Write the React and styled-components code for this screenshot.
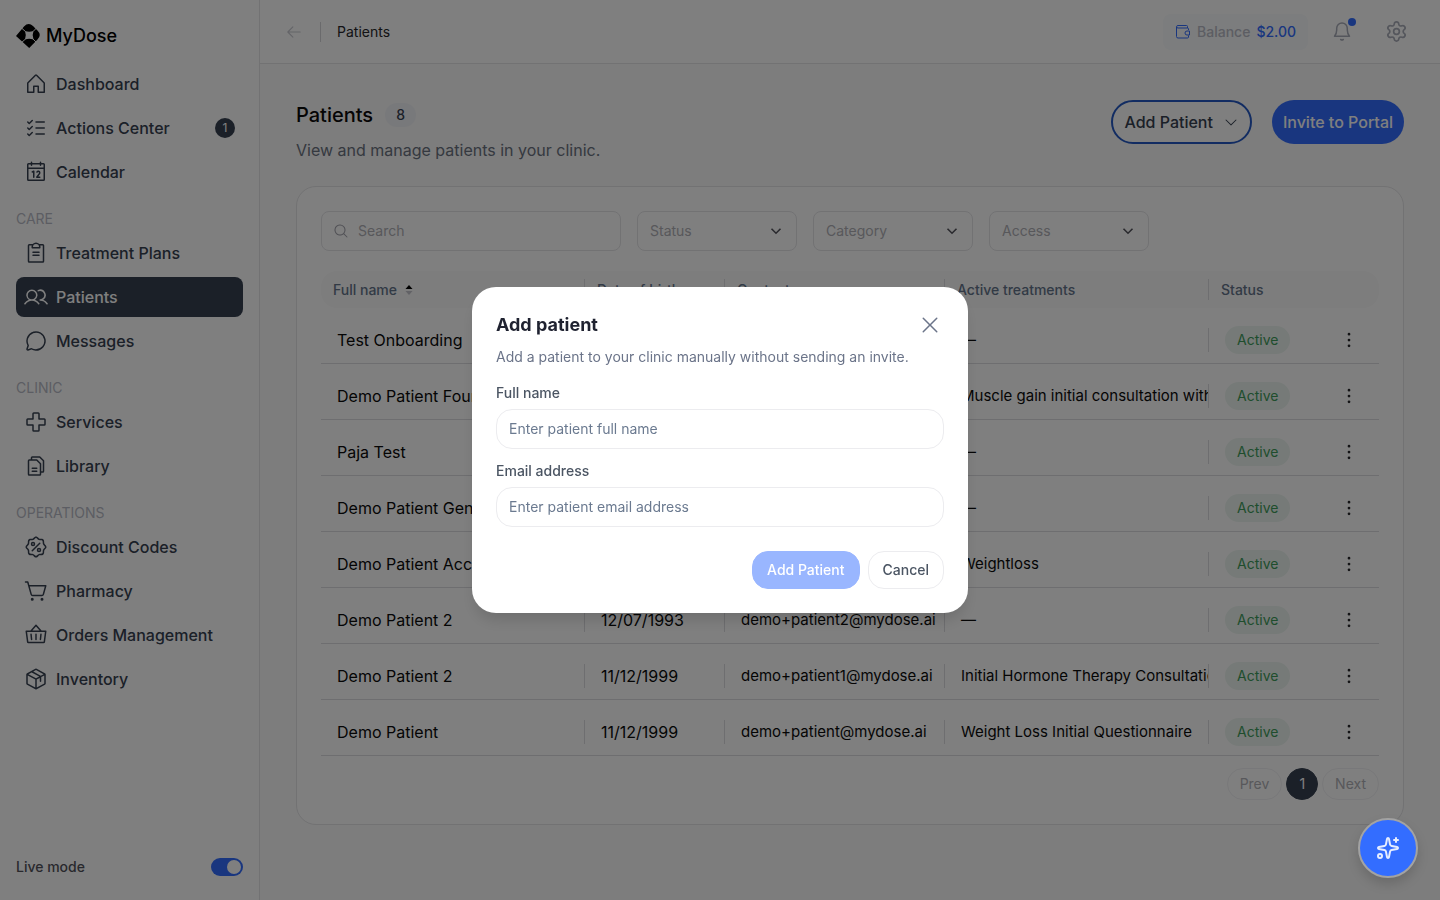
import React from 'react';
import styled, { createGlobalStyle } from 'styled-components';
import {
  PiHouse, PiListChecks, PiCalendar, PiClipboardText, PiUsers, PiChatCircle, PiFirstAid, PiFiles,
  PiSealPercent, PiShoppingCartSimple, PiBasket, PiPackage, PiArrowLeft, PiCaretDown, PiMagnifyingGlass,
  PiX, PiDotsThreeVerticalBold,
} from 'react-icons/pi';
import { Sparkles, Settings } from 'lucide-react';

const GlobalStyle = createGlobalStyle`
  * {
    box-sizing: border-box;
  }
  body {
    margin: 0;
    background: #fafafa;
    color: #0a0a0a;
    font-family: Inter, 'Liberation Sans', sans-serif;
    font-size: 16px;
    line-height: 24px;
  }
  button, input, select {
    font: inherit;
    color: inherit;
    margin: 0;
  }
  h1, h2, p {
    margin: 0;
  }
`

const Page = styled.div`
  display: flex;
  min-height: 100vh;
`

const Sidebar = styled.aside`
  display: flex;
  flex-direction: column;
  flex: none;
  width: 260px;
  padding: 20px 16px;
  background: #fff;
  border-right: 1px solid #e4e4e7;
`

const Logo = styled.a`
  display: flex;
  align-items: center;
  gap: 6px;
  height: 32px;
  margin-bottom: 12px;
  color: #000;
  font-size: 18px;
  font-weight: 500;
  text-decoration: none;
`

const NavGroup = styled.nav`
  display: flex;
  flex-direction: column;
  gap: 4px;
  margin-bottom: 16px;
`

const NavTitle = styled.span`
  height: 21px;
  color: #b8bbc6;
  font-size: 14px;
  line-height: 22px;
`

const NavItem = styled.a`
  display: flex;
  align-items: center;
  gap: 8px;
  height: 40px;
  padding: 0 8px;
  border-radius: 8px;
  background: ${props => props.$active ? '#374151' : 'transparent'};
  color: ${props => props.$active ? '#fff' : '#374151'};
  font-weight: 500;
  text-decoration: none;
`

const NavCount = styled.span`
  width: 20px;
  height: 20px;
  margin-left: auto;
  border-radius: 50%;
  background: #374151;
  color: #fff;
  font-size: 12px;
  font-weight: 400;
  line-height: 20px;
  text-align: center;
`

const LiveMode = styled.label`
  display: flex;
  align-items: center;
  justify-content: space-between;
  height: 26px;
  margin-top: auto;
  color: #52525b;
  font-size: 14px;
  font-weight: 500;
`

const Switch = styled.input`
  appearance: none;
  display: flex;
  justify-content: flex-end;
  width: 32px;
  height: 18px;
  padding: 2px;
  border-radius: 9px;
  background: #336dff;
  &::before {
    content: '';
    width: 14px;
    height: 14px;
    border-radius: 50%;
    background: #fff;
  }
`

const Main = styled.main`
  flex: 1;
  min-width: 0;
`

const TopBar = styled.header`
  display: flex;
  align-items: center;
  height: 64px;
  padding: 0 32px 0 24px;
  background: #fff;
  border-bottom: 1px solid #e4e4e7;
`

const IconButton = styled.button`
  position: relative;
  display: flex;
  align-items: center;
  justify-content: center;
  width: ${props => props.$size || 24}px;
  height: ${props => props.$size || 24}px;
  padding: 0;
  border: 0;
  background: none;
  color: ${props => props.$color || '#a9acb8'};
`

const Crumb = styled.span`
  margin-left: 16px;
  padding-left: 16px;
  border-left: 1px solid #d4d4d8;
  color: #27272a;
  font-size: 14px;
  line-height: 20px;
`

const TopActions = styled.div`
  display: flex;
  align-items: center;
  gap: 30px;
  margin-left: auto;
`

const Balance = styled.div`
  display: flex;
  align-items: center;
  gap: 6px;
  height: 36px;
  margin-right: -8px;
  padding: 0 12px;
  border-radius: 8px;
  background: #f8fafc;
  color: #b8bbc6;
  font-size: 14px;
  font-weight: 500;
  svg, b {
    color: #336dff;
    font-weight: 500;
  }
`

const Dot = styled.span`
  position: absolute;
  top: -2px;
  right: -2px;
  width: 8px;
  height: 8px;
  border-radius: 50%;
  background: #336dff;
`

const Content = styled.div`
  padding: 36px;
`

const Heading = styled.div`
  display: flex;
  justify-content: space-between;
  height: 86px;
`

const Title = styled.h1`
  display: flex;
  align-items: center;
  gap: 12px;
  height: 30px;
  margin-bottom: 8px;
  font-size: 20px;
  font-weight: 500;
`

const Count = styled.span`
  padding: 0 11px;
  border-radius: 12px;
  background: #f1f2f6;
  color: #374151;
  font-size: 14px;
  line-height: 24px;
`

const Subtitle = styled.p`
  color: #6b7280;
`

const HeadingActions = styled.div`
  display: flex;
  gap: 20px;
`

const PillButton = styled.button`
  display: flex;
  align-items: center;
  gap: 10px;
  height: 44px;
  padding: 0 11px;
  border: ${props => props.$primary ? 0 : '2px solid #2459c4'};
  border-radius: 22px;
  background: ${props => props.$primary ? '#336dff' : '#fff'};
  color: ${props => props.$primary ? '#fff' : '#374151'};
  font-weight: 500;
`

const Card = styled.section`
  padding: 24px;
  border: 1px solid #e4e4e7;
  border-radius: 20px;
  background: #fff;
`

const Filters = styled.div`
  display: flex;
  gap: 16px;
  margin-bottom: 20px;
`

const SearchBox = styled.label`
  display: flex;
  align-items: center;
  gap: 9px;
  width: 300px;
  height: 40px;
  padding: 0 11px;
  border: 1px solid #e4e4e7;
  border-radius: 8px;
  color: #a1a1aa;
  font-size: 14px;
  input {
    min-width: 0;
    padding: 0;
    border: 0;
    outline: 0;
    background: none;
  }
  input::placeholder {
    color: #b0b0b6;
  }
`

const SelectBox = styled.div`
  display: grid;
  align-items: center;
  width: 160px;
  height: 40px;
  > * {
    grid-area: 1 / 1;
  }
  svg {
    justify-self: end;
    margin-right: 14px;
    pointer-events: none;
  }
`

const Select = styled.select`
  appearance: none;
  width: 100%;
  height: 40px;
  padding: 0 12px;
  border: 1px solid #e4e4e7;
  border-radius: 8px;
  background: none;
  color: #b0b0b6;
  font-size: 14px;
`

const Table = styled.table`
  width: 100%;
  border-collapse: separate;
  border-spacing: 0;
  table-layout: fixed;
`

const Th = styled.th`
  height: 37px;
  padding: 0;
  background: #fafafa;
  color: #64748b;
  font-size: 14px;
  font-weight: 500;
  line-height: 21px;
  text-align: left;
  &:first-child {
    border-radius: 16px 0 0 16px;
  }
  &:last-child {
    border-radius: 0 16px 16px 0;
  }
`

const Td = styled.td`
  height: 56px;
  padding: 8px 0 0 ${props => props.$menu ? 20 : 0}px;
  border-bottom: 1px solid #dcdce0;
`

const Cell = styled.div`
  display: flex;
  align-items: center;
  gap: 8px;
  height: ${props => props.$head ? 21 : 24}px;
  padding-left: ${props => props.$head ? 12 : 16}px;
  border-right: ${props => props.$divided ? '1px solid #dcdce0' : 0};
  overflow: ${props => props.$divided ? 'hidden' : 'visible'};
  font-size: ${props => props.$head ? 14 : props.$long ? 15 : 16}px;
  white-space: nowrap;
`

const Status = styled.span`
  padding: 0 12px;
  border-radius: 14px;
  background: #ecf5f0;
  color: #3f9c5b;
  font-size: 14px;
  line-height: 28px;
`

const Pagination = styled.div`
  display: flex;
  justify-content: flex-end;
  gap: 4px;
  padding-top: 12px;
`

const PageButton = styled.button`
  height: 32px;
  padding: 0 12px;
  border: 1px solid ${props => props.$current ? '#374151' : '#f1f1f4'};
  border-radius: 16px;
  background: ${props => props.$current ? '#374151' : '#fff'};
  color: ${props => props.$current ? '#fff' : '#b0b0b6'};
  font-size: 14px;
  line-height: 20px;
`

const Overlay = styled.div`
  position: fixed;
  inset: 0;
  z-index: 10;
  display: flex;
  align-items: center;
  justify-content: center;
  background: rgba(0, 0, 0, .5);
`

const Dialog = styled.form`
  width: 496px;
  padding: 24px;
  border-radius: 24px;
  background: #fff;
  box-shadow: 0 10px 16px -4px rgba(0, 0, 0, .15);
  font-size: 14px;
  line-height: 20px;
`

const DialogHead = styled.div`
  display: flex;
  align-items: center;
  justify-content: space-between;
  height: 28px;
  margin-bottom: 8px;
  padding-right: 2px;
  h2 {
    color: #1f2230;
    font-size: 18px;
    font-weight: 700;
  }
`

const DialogText = styled.p`
  margin-bottom: 16px;
  color: #6b7489;
`

const Field = styled.label`
  display: block;
  margin-bottom: 12px;
  color: #4b5563;
  font-weight: 500;
`

const TextInput = styled.input`
  display: block;
  width: 100%;
  height: 40px;
  margin-top: 6px;
  padding: 0 12px 2px;
  border: 1px solid #ececef;
  border-radius: 16px;
  font-weight: 400;
  &::placeholder {
    color: #6b7a90;
  }
`

const DialogActions = styled.div`
  display: flex;
  justify-content: flex-end;
  gap: 8px;
  margin-top: 24px;
`

const DialogButton = styled.button`
  height: 38px;
  padding: 0 14px;
  border: 1px solid ${props => props.$primary ? '#99b6ff' : '#ececef'};
  border-radius: 16px;
  background: ${props => props.$primary ? '#99b6ff' : '#fff'};
  color: ${props => props.$primary ? '#fff' : '#4b5563'};
  font-weight: 500;
`

const AssistantButton = styled.button`
  position: fixed;
  right: 22px;
  bottom: 22px;
  z-index: 20;
  display: flex;
  align-items: center;
  justify-content: center;
  width: 60px;
  height: 60px;
  padding: 0;
  border: 2px solid #a3a3a3;
  border-radius: 50%;
  background: #336dff;
  color: #e6edff;
  box-shadow: 0 6px 12px rgba(0, 0, 0, .15);
`

const navGroups = [
  { items: [['Dashboard', PiHouse], ['Actions Center', PiListChecks, 1], ['Calendar', PiCalendar]] },
  { title: 'CARE', items: [['Treatment Plans', PiClipboardText], ['Patients', PiUsers], ['Messages', PiChatCircle]] },
  { title: 'CLINIC', items: [['Services', PiFirstAid], ['Library', PiFiles]] },
  {
    title: 'OPERATIONS',
    items: [['Discount Codes', PiSealPercent], ['Pharmacy', PiShoppingCartSimple], ['Orders Management', PiBasket], ['Inventory', PiPackage]],
  },
]

const patients = [
  ['Test Onboarding', '—', 'onboarding@mydose.ai', '—'],
  ['Demo Patient Four', '11/12/1999', 'demo+patient4@mydose.ai', 'Muscle gain initial consultation with labs'],
  ['Paja Test', '—', 'paja@mydose.ai', '—'],
  ['Demo Patient General', '11/12/1999', 'demo+general@mydose.ai', '—'],
  ['Demo Patient Account', '11/12/1999', 'demo+account@mydose.ai', 'Weightloss'],
  ['Demo Patient 2', '12/07/1993', 'demo+patient2@mydose.ai', '—'],
  ['Demo Patient 2', '11/12/1999', 'demo+patient1@mydose.ai', 'Initial Hormone Therapy Consultation'],
  ['Demo Patient', '11/12/1999', 'demo+patient@mydose.ai', 'Weight Loss Initial Questionnaire'],
]

const LogoMark = () => (
  <svg width="24" height="24" viewBox="0 0 24 24">
    <path d="M0 12 8 2.500Q12.500-2 17 2L21.500 6.500Q26 11 21.500 15.500L13.200 24Z" fill="currentColor" />
    <path d="M9 7Q13 8.600 17.500 7Q15.800 11 17.500 15.500Q13 13.800 9 15.500Q10.600 11 9 7Z" fill="#fff" />
    <path d="M9.500 7.500 5.500 4M17 7.500l3.500-3.500M17 15l4 4M9.500 15l-4.500 4" stroke="#fff" />
  </svg>
)

const WalletIcon = () => (
  <svg width="16" height="16" viewBox="0 0 16 16" fill="none" stroke="currentColor">
    <path d="M13.500 6V5Q13.500 4 12.500 4H3Q1.500 4 1.500 2.800T3 1.500h8.500q1 0 1 1V4M1.500 3v9.500q0 1.500 1.500 1.500h9.500q1 0 1-1v-1.500" />
    <path d="M14.500 7h-2.500a2 2 0 0 0 0 4h2.500Z" />
  </svg>
)

const BellIcon = () => (
  <svg width="24" height="24" viewBox="0 0 24 24" fill="none" stroke="currentColor" strokeWidth="1.5" strokeLinecap="round" strokeLinejoin="round">
    <path d="M4.500 16.200h15c-1.500-1.800-2.200-3.600-2.200-6.200V8.300a5.300 5.300 0 0 0-10.600 0V10c0 2.600-.7 4.400-2.200 6.200Z" />
    <path d="M10.700 19.500q1.300.8 2.600 0" />
  </svg>
)

const Chevron = () => (
  <svg width="14" height="14" viewBox="0 0 14 14" fill="none" stroke="#52525b" strokeWidth="1.600">
    <path d="M2.500 4.800 7 9.200l4.500-4.400" />
  </svg>
)

const SortIcon = () => (
  <svg width="8" height="12" viewBox="0 0 8 12">
    <path d="M4 1 7.500 5H.5Z" fill="#000" />
    <path d="M4 11 7.500 7H.5Z" fill="#c4c4cc" />
  </svg>
)

const FilterSelect = ({ label }) => (
  <SelectBox>
    <Select aria-label={label}>
      <option>{label}</option>
    </Select>
    <Chevron />
  </SelectBox>
)

const SideNav = () => (
  <Sidebar>
    <Logo href="#"><LogoMark />MyDose</Logo>
    {navGroups.map((group, i) => (
      <NavGroup key={i}>
        {group.title && <NavTitle>{group.title}</NavTitle>}
        {group.items.map(([name, Icon, count]) => (
          <NavItem key={name} href="#" $active={name === 'Patients'}>
            <Icon size={24} />
            {name}
            {count && <NavCount>{count}</NavCount>}
          </NavItem>
        ))}
      </NavGroup>
    ))}
    <LiveMode>
      Live mode
      <Switch type="checkbox" role="switch" defaultChecked />
    </LiveMode>
  </Sidebar>
)

const PatientsTable = () => (
  <Table>
    <colgroup>
      <col style={{ width: 264 }} />
      <col style={{ width: 140 }} />
      <col style={{ width: 220 }} />
      <col style={{ width: 264 }} />
      <col />
      <col style={{ width: 62 }} />
    </colgroup>
    <thead>
      <tr>
        <Th><Cell $head $divided>Full name <SortIcon /></Cell></Th>
        <Th><Cell $head $divided>Date of birth</Cell></Th>
        <Th><Cell $head $divided>Contact</Cell></Th>
        <Th><Cell $head $divided>Active treatments</Cell></Th>
        <Th><Cell $head>Status</Cell></Th>
        <Th />
      </tr>
    </thead>
    <tbody>
      {patients.map((patient, i) => (
        <tr key={i}>
          {patient.map((value, j) => <Td key={j}><Cell $divided $long={j > 1}>{value}</Cell></Td>)}
          <Td><Cell><Status>Active</Status></Cell></Td>
          <Td $menu>
            <IconButton aria-label="Patient menu" $color="#27272a"><PiDotsThreeVerticalBold size={22} /></IconButton>
          </Td>
        </tr>
      ))}
    </tbody>
  </Table>
)

const AddPatientDialog = () => (
  <Overlay>
    <Dialog role="dialog" aria-labelledby="dialog-title">
      <DialogHead>
        <h2 id="dialog-title">Add patient</h2>
        <IconButton type="button" aria-label="Close" $color="#6b7489"><PiX size={24} /></IconButton>
      </DialogHead>
      <DialogText>Add a patient to your clinic manually without sending an invite.</DialogText>
      <Field>
        Full name
        <TextInput placeholder="Enter patient full name" />
      </Field>
      <Field>
        Email address
        <TextInput type="email" placeholder="Enter patient email address" />
      </Field>
      <DialogActions>
        <DialogButton type="submit" $primary disabled>Add Patient</DialogButton>
        <DialogButton type="button">Cancel</DialogButton>
      </DialogActions>
    </Dialog>
  </Overlay>
)

const App = () => (
  <>
    <GlobalStyle />
    <Page>
      <SideNav />
      <Main>
        <TopBar>
          <IconButton aria-label="Back" $size={20} $color="#c8c9d0"><PiArrowLeft size={18} /></IconButton>
          <Crumb>Patients</Crumb>
          <TopActions>
            <Balance><WalletIcon />Balance <b>$2.00</b></Balance>
            <IconButton aria-label="Notifications"><BellIcon /><Dot /></IconButton>
            <IconButton aria-label="Settings"><Settings size={23} strokeWidth={1.75} /></IconButton>
          </TopActions>
        </TopBar>
        <Content>
          <Heading>
            <div>
              <Title>Patients <Count>8</Count></Title>
              <Subtitle>View and manage patients in your clinic.</Subtitle>
            </div>
            <HeadingActions>
              <PillButton>Add Patient <PiCaretDown size={16} /></PillButton>
              <PillButton $primary>Invite to Portal</PillButton>
            </HeadingActions>
          </Heading>
          <Card>
            <Filters>
              <SearchBox>
                <PiMagnifyingGlass size={16} />
                <input placeholder="Search" aria-label="Search" />
              </SearchBox>
              <FilterSelect label="Status" />
              <FilterSelect label="Category" />
              <FilterSelect label="Access" />
            </Filters>
            <PatientsTable />
            <Pagination>
              <PageButton>Prev</PageButton>
              <PageButton $current>1</PageButton>
              <PageButton>Next</PageButton>
            </Pagination>
          </Card>
        </Content>
      </Main>
    </Page>
    <AddPatientDialog />
    <AssistantButton aria-label="Assistant"><Sparkles size={24} /></AssistantButton>
  </>
)

export default App;
